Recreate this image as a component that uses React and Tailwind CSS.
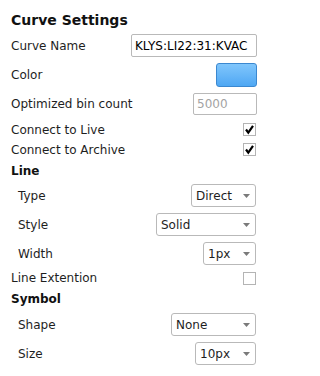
import React from "react";

function Arrow() {
  return (
    <svg width="7" height="4" viewBox="0 0 7 4" className="shrink-0">
      <path d="M0 0 L7 0 L3.5 4 Z" fill="#7a7a7a" />
    </svg>
  );
}

function Combo({ value, w }) {
  return (
    <div
      className={`${w} h-[23px] border border-[#b9b9b9] rounded-[3px] bg-white flex items-center justify-between pl-[4px] pr-[5px] text-[#1e1e1e]`}
    >
      <span>{value}</span>
      <Arrow />
    </div>
  );
}

function Check({ checked }) {
  return (
    <div className="w-[13px] h-[13px] border border-[#b4b4b4] bg-white flex items-center justify-center mr-[1px]">
      {checked && (
        <svg width="11" height="11" viewBox="0 0 11 11">
          <path d="M2 5.5 L4.3 8.6 L9 1.8" fill="none" stroke="#000" strokeWidth="2.2" />
        </svg>
      )}
    </div>
  );
}

export default function App() {
  return (
    <div className="w-[268px] h-[376px] bg-white pl-[11px] pr-[11px] text-[12px] text-[#1e1e1e] [font-family:'DejaVu_Sans',sans-serif] flex flex-col">
      <div className="mt-[8px] h-[24px] flex items-center text-[14px] font-bold text-[#111]">
        Curve Settings
      </div>
      <div className="mt-[2px] h-[23px] flex items-center justify-between">
        <span>Curve Name</span>
        <div className="w-[126px] h-[23px] border border-[#b9b9b9] rounded-[2px] bg-white flex items-center pl-[3px] text-[#000] overflow-hidden whitespace-nowrap">
          KLYS:LI22:31:KVAC
        </div>
      </div>
      <div className="mt-[6px] h-[24px] flex items-center justify-between">
        <span>Color</span>
        <div className="w-[41px] h-[24px] rounded-[3px] border border-[#3b88d0] bg-linear-to-b from-[#80c6fc] to-[#4ea7f3]" />
      </div>
      <div className="mt-[6px] h-[22px] flex items-center justify-between">
        <span>Optimized bin count</span>
        <div className="w-[64px] h-[22px] border border-[#b9b9b9] rounded-[2px] bg-white flex items-center pl-[3px] text-[#a3a3a3]">
          5000
        </div>
      </div>
      <div className="mt-[8px] h-[13px] flex items-center justify-between">
        <span>Connect to Live</span>
        <Check checked />
      </div>
      <div className="mt-[7px] h-[13px] flex items-center justify-between">
        <span>Connect to Archive</span>
        <Check checked />
      </div>
      <div className="mt-[5px] h-[20px] flex items-center font-bold text-[#111]">
        Line
      </div>
      <div className="mt-[3px] h-[23px] flex items-center justify-between pl-[7px] pr-[1px]">
        <span>Type</span>
        <Combo value="Direct" w="w-[65px]" />
      </div>
      <div className="mt-[6px] h-[23px] flex items-center justify-between pl-[7px] pr-[1px]">
        <span>Style</span>
        <Combo value="Solid" w="w-[100px]" />
      </div>
      <div className="mt-[6px] h-[23px] flex items-center justify-between pl-[7px] pr-[1px]">
        <span>Width</span>
        <Combo value="1px" w="w-[53px]" />
      </div>
      <div className="mt-[6px] h-[14px] flex items-center justify-between">
        <span>Line Extention</span>
        <Check />
      </div>
      <div className="mt-[4px] h-[20px] flex items-center font-bold text-[#111]">
        Symbol
      </div>
      <div className="mt-[4px] h-[23px] flex items-center justify-between pl-[7px] pr-[1px]">
        <span>Shape</span>
        <Combo value="None" w="w-[85px]" />
      </div>
      <div className="mt-[6px] h-[23px] flex items-center justify-between pl-[7px] pr-[1px]">
        <span>Size</span>
        <Combo value="10px" w="w-[61px]" />
      </div>
    </div>
  );
}
